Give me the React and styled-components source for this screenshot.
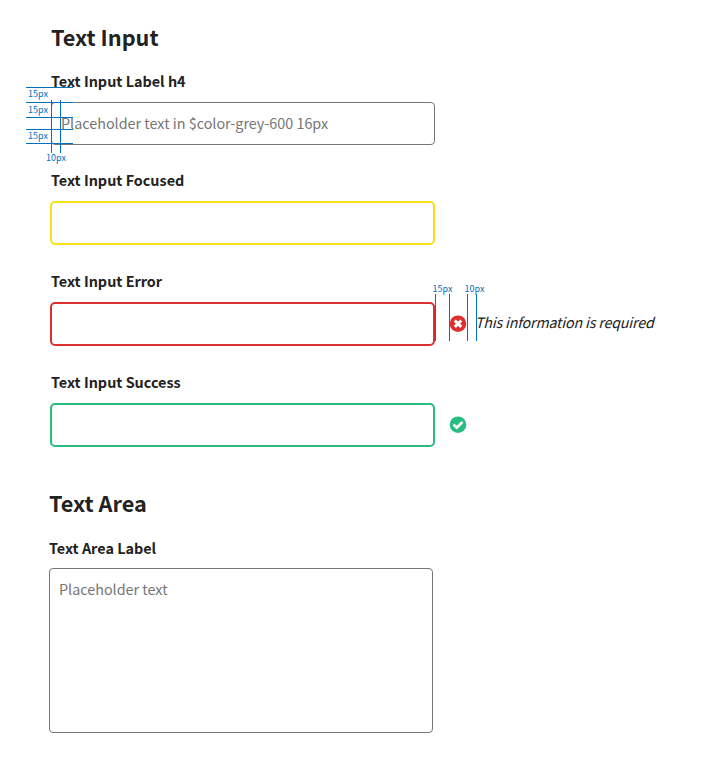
import React from "react";
import styled, { createGlobalStyle } from "styled-components";

const GlobalStyle = createGlobalStyle`
  * { box-sizing: border-box; }
  body {
    margin: 0;
    background: #fff;
    color: #222;
    font-family: "Noto Sans CJK SC", "Noto Sans", sans-serif;
  }
`;

const Page = styled.main`
  width: 708px;
  height: 763px;
  padding: 22px 0 0 50px;
  overflow: hidden;
`;

const Section = styled.section`
  display: flex;
  flex-direction: column;
  align-items: flex-start;
  margin-left: ${(p) => p.$shift || 0}px;
`;

const Heading = styled.h2`
  margin: 0 0 ${(p) => p.$gap}px;
  padding-left: ${(p) => p.$indent || 0}px;
  font-size: 21.7px;
  line-height: 30px;
  font-weight: 700;
  white-space: nowrap;
`;

const Field = styled.div`
  position: relative;
  display: flex;
  flex-direction: column;
  align-items: flex-start;
  margin-bottom: ${(p) => p.$gap}px;
`;

const Label = styled.label`
  padding-left: ${(p) => p.$indent || 0}px;
  margin-bottom: ${(p) => p.$gap ?? 11}px;
  font-size: 14.4px;
  line-height: 20px;
  font-weight: 700;
  white-space: nowrap;
`;

const Row = styled.div`
  display: flex;
  align-items: center;
`;

const borderColors = {
  focused: "#f7e017",
  error: "#dc3030",
  success: "#28bd7f",
};

const controlText = `
  display: block;
  outline: none;
  background: #fff;
  border-radius: 4px;
  font-family: inherit;
  font-size: 14.37px;
  color: #222;
  &::placeholder { color: #767676; opacity: 1; }
`;

const Input = styled.input`
  ${controlText}
  width: ${(p) => (p.$state ? 385 : 384)}px;
  height: ${(p) => (p.$state ? 44 : 43)}px;
  margin-left: ${(p) => (p.$state ? 0 : 1)}px;
  padding: 0 9px 2px;
  border: ${(p) => (p.$state ? `2px solid ${borderColors[p.$state]}` : "1px solid #767676")};
  border-radius: ${(p) => (p.$state ? 5 : 4)}px;
`;

const TextArea = styled.textarea`
  ${controlText}
  width: 384px;
  height: 165px;
  padding: 10px 9px;
  border: 1px solid #767676;
  line-height: 20px;
  resize: none;
`;

const StatusIcon = styled.svg`
  width: 18px;
  height: 18px;
  margin-left: 14px;
  flex: none;
`;

const Message = styled.span`
  margin-left: 8px;
  padding-bottom: 4px;
  font-size: 14.3px;
  letter-spacing: -0.2px;
  line-height: 20px;
  font-style: italic;
  white-space: nowrap;
`;

const Guide = styled.i`
  position: absolute;
  left: ${(p) => p.$x}px;
  top: ${(p) => p.$y}px;
  width: ${(p) => p.$w || 1}px;
  height: ${(p) => p.$h || 1}px;
  background: #0071bc;
`;

const Measure = styled.span`
  position: absolute;
  left: ${(p) => p.$x}px;
  top: ${(p) => p.$y}px;
  font-size: 9px;
  line-height: 12px;
  color: #0071bc;
  white-space: nowrap;
`;

function ErrorIcon() {
  return (
    <StatusIcon viewBox="0 0 18 18">
      <circle cx="9" cy="8.7" r="8.3" fill="#dc3030" />
      <path d="M5.8 5.5l6.4 6.4M12.2 5.5l-6.4 6.4" stroke="#fff" strokeWidth="3" />
    </StatusIcon>
  );
}

function SuccessIcon() {
  return (
    <StatusIcon viewBox="0 0 18 18">
      <circle cx="9" cy="8.7" r="8.3" fill="#28bd7f" />
      <path d="M4.5 8.5l3.2 3.2 5.8-5.7" fill="none" stroke="#fff" strokeWidth="2.6" />
    </StatusIcon>
  );
}

export default function App() {
  return (
    <Page>
      <GlobalStyle />
      <Section>
        <Heading $indent={1} $gap={19}>Text Input</Heading>
        <Field $gap={25}>
          <Label $indent={1}>Text Input Label h4</Label>
          <Input placeholder="Placeholder text in $color-grey-600 16px" />
          {[16, 31, 46, 58, 72].map((y) => (
            <Guide key={y} $x={-24} $y={y} $w={47} />
          ))}
          <Guide $x={1} $y={29} $h={53} />
          <Guide $x={10} $y={29} $h={53} />
          <Measure $x={-22} $y={17}>15px</Measure>
          <Measure $x={-22} $y={33}>15px</Measure>
          <Measure $x={-22} $y={59}>15px</Measure>
          <Measure $x={-4} $y={81}>10px</Measure>
        </Field>
        <Field $gap={26}>
          <Label $indent={1}>Text Input Focused</Label>
          <Input $state="focused" />
        </Field>
        <Field $gap={26}>
          <Label $indent={1}>Text Input Error</Label>
          <Row>
            <Input $state="error" />
            <ErrorIcon />
            <Message>This information is required</Message>
          </Row>
          {[385, 399, 417, 426].map((x) => (
            <Guide key={x} $x={x} $y={23} $h={47} />
          ))}
          <Measure $x={382.5} $y={12}>15px</Measure>
          <Measure $x={414.5} $y={12}>10px</Measure>
        </Field>
        <Field $gap={41}>
          <Label $indent={1}>Text Input Success</Label>
          <Row>
            <Input $state="success" />
            <SuccessIcon />
          </Row>
        </Field>
      </Section>
      <Section $shift={-1}>
        <Heading $gap={20}>Text Area</Heading>
        <Field $gap={0}>
          <Label $gap={10}>Text Area Label</Label>
          <TextArea placeholder="Placeholder text" />
        </Field>
      </Section>
    </Page>
  );
}
